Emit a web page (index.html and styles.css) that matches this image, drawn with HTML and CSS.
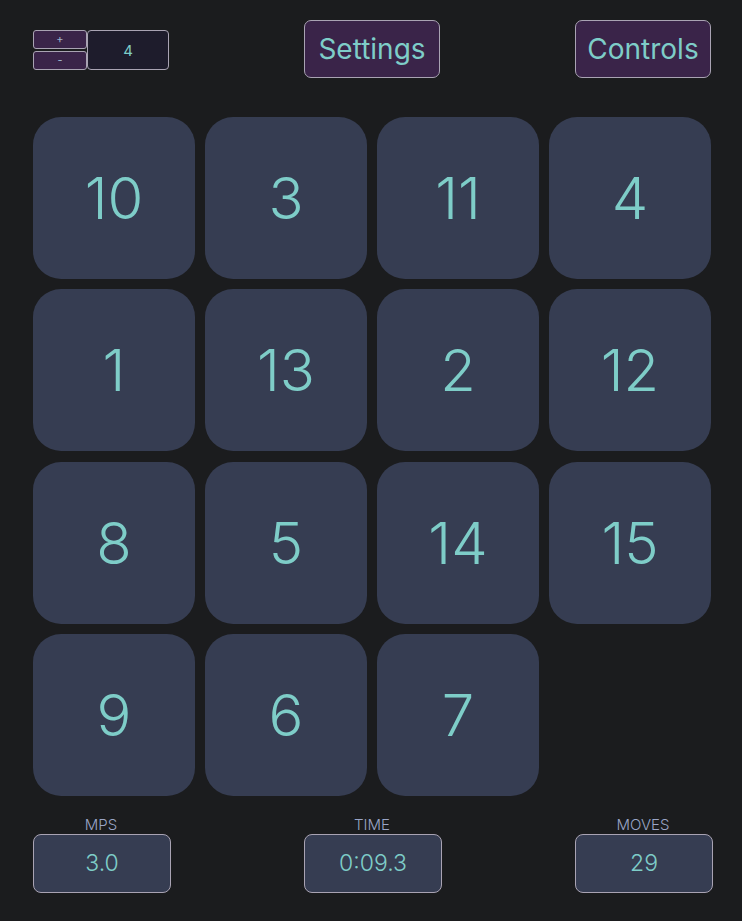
FILE: index.html
```html
<!DOCTYPE html>
<html>
<head>
<meta charset="utf-8">
<link rel="stylesheet" href="styles.css">
</head>
<body>
<div class="app">
  <div class="topbar">
    <div class="size-group">
      <div class="stepper">
        <button class="step">+</button>
        <button class="step">-</button>
      </div>
      <div class="size-input">4</div>
    </div>
    <button class="btn">Settings</button>
    <button class="btn">Controls</button>
  </div>
  <div class="board">
    <div class="tile">10</div>
    <div class="tile">3</div>
    <div class="tile">11</div>
    <div class="tile">4</div>
    <div class="tile">1</div>
    <div class="tile">13</div>
    <div class="tile">2</div>
    <div class="tile">12</div>
    <div class="tile">8</div>
    <div class="tile">5</div>
    <div class="tile">14</div>
    <div class="tile">15</div>
    <div class="tile">9</div>
    <div class="tile">6</div>
    <div class="tile">7</div>
    <div class="empty"></div>
  </div>
  <div class="stats">
    <div class="stat">
      <div class="label">MPS</div>
      <div class="value">3.0</div>
    </div>
    <div class="stat">
      <div class="label">TIME</div>
      <div class="value">0:09.3</div>
    </div>
    <div class="stat">
      <div class="label">MOVES</div>
      <div class="value">29</div>
    </div>
  </div>
</div>
</body>
</html>
```
FILE: styles.css
```css
* { box-sizing: border-box; }
html, body {
  margin: 0;
  padding: 0;
  background: #1b1c1e;
}
body {
  font-family: "Inter", "DejaVu Sans", sans-serif;
  color: #7ecdc8;
}
.app {
  width: 678px;
  margin-left: 33px;
  padding-top: 20px;
}
.topbar {
  display: flex;
  justify-content: space-between;
  align-items: flex-start;
  height: 58px;
}
.size-group {
  display: flex;
  margin-top: 10px;
  width: 136px;
}
.stepper {
  display: flex;
  flex-direction: column;
  gap: 2px;
}
.step {
  width: 54px;
  height: 19px;
  background: #3a2449;
  border: 1px solid #a9a3b3;
  border-radius: 3px;
  color: #9fb4cf;
  font-family: inherit;
  font-size: 11px;
  line-height: 15px;
  padding: 0;
}
.size-input {
  width: 82px;
  height: 40px;
  background: #1e1c2c;
  border: 1px solid #a9a3b3;
  border-radius: 4px;
  display: flex;
  align-items: center;
  justify-content: center;
  font-size: 15px;
  color: #7ecdc8;
}
.btn {
  width: 136px;
  height: 58px;
  background: #3a2449;
  border: 1px solid #a9a3b3;
  border-radius: 7px;
  color: #7ecdc8;
  font-family: inherit;
  font-size: 28px;
  padding: 0;
}
.board {
  margin-top: 39px;
  display: grid;
  grid-template-columns: repeat(4, 162px);
  grid-auto-rows: 162px;
  column-gap: 10px;
  row-gap: 10.3px;
}
.tile {
  background: #363d52;
  border-radius: 28px;
  display: flex;
  align-items: center;
  justify-content: center;
  font-size: 58px;
  font-weight: 300;
  color: #7ecdc8;
}
.stats {
  margin-top: 20px;
  display: flex;
  justify-content: space-between;
}
.stat {
  width: 136px;
  display: flex;
  flex-direction: column;
  align-items: center;
}
.label {
  font-size: 15px;
  line-height: 18px;
  color: #9aa5c6;
  font-weight: 300;
}
.value {
  width: 138px;
  flex: none;
  align-self: flex-start;
  height: 59px;
  background: #363d52;
  border: 1px solid #a9a3b3;
  border-radius: 8px;
  display: flex;
  align-items: center;
  justify-content: center;
  font-size: 23px;
  color: #7ecdc8;
  font-weight: 300;
}
```
